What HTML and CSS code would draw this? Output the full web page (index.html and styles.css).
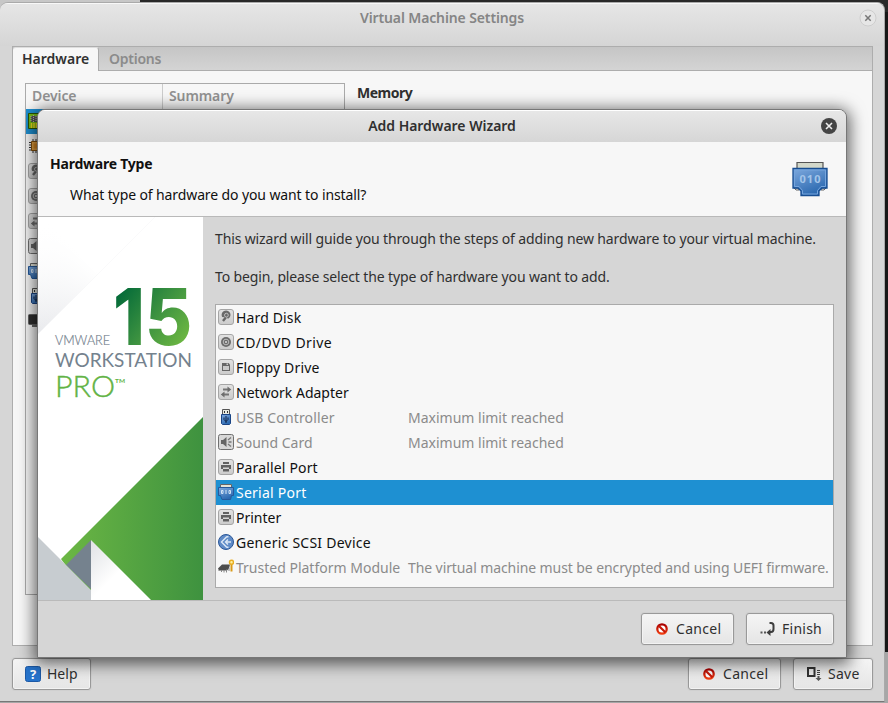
FILE: index.html
```html
<!DOCTYPE html>
<html lang="en">
<head>
<meta charset="utf-8">
<title>Virtual Machine Settings</title>
<link rel="stylesheet" href="styles.css">
</head>
<body>
<svg class="defs" width="0" height="0" aria-hidden="true">
  <defs>
    <linearGradient id="blue" x1="0" y1="0" x2=".5" y2="1"><stop offset="0" stop-color="#7ea9de"/><stop offset="1" stop-color="#2c69b0"/></linearGradient>
    <linearGradient id="paper" x1="0" y1="0" x2="0" y2="1"><stop offset="0" stop-color="#e2e2e2"/><stop offset="1" stop-color="#cbcbcb"/></linearGradient>
    <linearGradient id="stop" x1="0" y1="0" x2="0" y2="1"><stop offset="0" stop-color="#a80000"/><stop offset="1" stop-color="#f03c10"/></linearGradient>
    <symbol id="tile" viewBox="0 0 16 16"><rect x=".5" y=".5" width="15" height="15" rx="2.5" fill="url(#paper)" stroke="#a5a5a5"/></symbol>
    <symbol id="disk" viewBox="0 0 16 16"><use href="#tile"/><path d="M4.200 8A4.400 4.400 0 1 1 10 9.800L8.500 8.500z" fill="#6a6a6a"/><circle cx="8.400" cy="6.200" r="1.900" fill="none" stroke="#c8c8c8" stroke-width=".9"/><path d="M7.800 8.500 5 12" stroke="#666" stroke-width="2.400"/></symbol>
    <symbol id="cd" viewBox="0 0 16 16"><use href="#tile"/><circle cx="8" cy="8" r="5" fill="#6c6c6c"/><circle cx="8" cy="8" r="2.800" fill="none" stroke="#bbb"/><circle cx="8" cy="8" r="1" fill="#ddd"/></symbol>
    <symbol id="floppy" viewBox="0 0 16 16"><use href="#tile"/><path d="M4 4h6.500L12 5.500V12H4z" fill="#666"/><path d="M5 7h6V11H5z" fill="#c9c9c9"/><path d="M8.500 4.500h1.500V6H8.500z" fill="#ccc"/></symbol>
    <symbol id="net" viewBox="0 0 16 16"><use href="#tile"/><path d="M5 5.500h5M11 10.500H6" stroke="#747474" stroke-width="1.800"/><path d="M9.500 2.500 13.200 5.500 9.500 8.500zM6.500 7.500 2.800 10.500 6.500 13.500z" fill="#6c6c6c"/></symbol>
    <symbol id="usb" viewBox="0 0 16 16"><path d="M4.500.5h7v6h-7z" fill="#e8eae2" stroke="#555"/><path d="M6 2h1v2H6zM9 2h1v2H9z" fill="#333"/><path d="M3.500 5.500h9v9l-1 1h-7l-1-1z" fill="url(#blue)" stroke="#1a4484"/><path d="M8 7v7M6 8.500v2l2 2 2-2v-2" fill="none" stroke="#0c2247"/></symbol>
    <symbol id="sound" viewBox="0 0 16 16"><rect x=".5" y=".5" width="15" height="15" rx="2" fill="#d8d8d8" stroke="#707070"/><path d="M3 6h2l3.500-3v10L5 10H3z" fill="#666"/><path d="M10 6l3-2.500M10.500 8H13.500M10 10l3 2.500" stroke="#777" stroke-width="1.300"/></symbol>
    <symbol id="print" viewBox="0 0 16 16"><use href="#tile"/><path d="M5 3h6v2H5zM3 6h10v4h-2V8.500H5V10H3zM5 10h6v2.500H5z" fill="#606060"/></symbol>
    <symbol id="serial" viewBox="0 0 36 37"><path d="M5 9V2.500h26V9" fill="#d3d8ca" stroke="#555" stroke-width="1.200"/><path d="M2 28h5v2H4zM34 28h-5v2h3z" fill="#eee" stroke="#666"/><path d="M1 8.500h34V28h-5l-3 3v4.500H9V31l-3-3H1z" fill="url(#blue)" stroke="#174d91" stroke-width="1.300"/><path d="M2.500 10h31v16.500h-4.500l-3.500 4V34h-15v-3.500l-3.500-4H2.500z" fill="none" stroke="#75a4dc"/><text x="18.500" y="22.500" text-anchor="middle" class="digits">010</text></symbol>
    <symbol id="serial16" viewBox="0 0 16 16"><path d="M2.500 4V.500h11V4" fill="#e4e4d8" stroke="#666"/><path d="M.500 3.500h15v8h-2l-1 4H4l-1.500-4h-2z" fill="url(#blue)" stroke="#25599b"/><path d="M3.500 6.500H5v3H3.500zM8 6v4M11 6.500h1.500v3H11z" fill="none" stroke="#d2e3f5"/></symbol>
    <symbol id="scsi" viewBox="0 0 16 16"><circle cx="8" cy="8" r="7.500" fill="#5f8bc7" stroke="#2b5797"/><path d="M10.500 2.500 8.500 3 3.500 8l5 5 2 .5M13 8H7.500M10 5.500 7.500 8 10 10.500" fill="none" stroke="#dbe7f5" stroke-width="1.400"/></symbol>
    <symbol id="tpm" viewBox="0 0 16 16"><path d="m0 9.500 4-4h8l-1 4-2 2H1z" fill="#4d4d4d"/><path d="M1 11v1M3.500 11v2M6 11v2.500M8.500 10.500v3M11 9v3" stroke="#888"/><path d="M13.500 5v7.500" stroke="#d99a18" stroke-width="2"/><circle cx="13.500" cy="3.300" r="2" fill="#fff1a0" stroke="#e9ad20" stroke-width="1.500"/></symbol>
    <symbol id="ram" viewBox="0 0 16 16"><path d="M.500.500h15v15H.500z" fill="#75bd18" stroke="#265606"/><path d="M3 3h10v6H3z" fill="#555"/><path d="M3 3v6M5.500 2v7M8 3v6M10.500 2v7" stroke="#bbb" stroke-dasharray="1 1"/><path d="M3.500 10v5M6 10v5M8.500 10v5M11 10v5" stroke="#f3dc20" stroke-width="1.500"/></symbol>
    <symbol id="cpu" viewBox="0 0 16 16"><path d="M1 4.500h14M1 7h14M1 9.500h14M1 12h14M5 1v14M8 1v14M11 1v14" stroke="#333"/><path d="M3.500 3.500h9v9h-9z" fill="#e2a144" stroke="#84500d"/><path d="M5.500 5.500h5v5h-5z" fill="#d78925"/></symbol>
    <symbol id="display" viewBox="0 0 16 16"><rect x=".500" y="1.500" width="15" height="10" rx="1" fill="#303030" stroke="#666"/><path d="M4 13h8" stroke="#666" stroke-width="2"/></symbol>
    <symbol id="ban" viewBox="0 0 12 12"><circle cx="6" cy="6" r="4.700" fill="#fff" stroke="url(#stop)" stroke-width="2.300"/><path d="m2.700 2.700 6.600 6.600" stroke="#c81808" stroke-width="2.200"/></symbol>
  </defs>
</svg>

<div class="desktop">
<main class="settings">
  <header class="titlebar"><span class="title">Virtual Machine Settings</span>
    <svg class="close" viewBox="0 0 18 18"><circle cx="9" cy="9" r="8" fill="#e6e6e6" stroke="#cdcdcd"/><path d="m6.300 6.300 5.400 5.400m0-5.400-5.400 5.400" stroke="#777" stroke-width="1.500"/></svg>
  </header>
  <section class="notebook">
    <nav class="tabs"><span class="tab active">Hardware</span><span class="tab">Options</span></nav>
    <div class="page">
      <div class="tree">
        <div class="treehead"><span>Device</span><span>Summary</span></div>
        <div class="device chosen"><svg><use href="#ram"/></svg></div>
        <div class="device"><svg><use href="#cpu"/></svg></div>
        <div class="device"><svg><use href="#disk"/></svg></div>
        <div class="device"><svg><use href="#cd"/></svg></div>
        <div class="device"><svg><use href="#net"/></svg></div>
        <div class="device"><svg><use href="#sound"/></svg></div>
        <div class="device"><svg><use href="#serial16"/></svg></div>
        <div class="device"><svg><use href="#usb"/></svg></div>
        <div class="device"><svg><use href="#display"/></svg></div>
      </div>
      <h2>Memory</h2>
    </div>
  </section>
  <footer class="actions">
    <button class="btn help"><svg viewBox="0 0 16 16"><rect x=".500" y=".500" width="15" height="15" rx="2" fill="#2673cb" stroke="#1c59a6"/><text x="8" y="12.700" text-anchor="middle" class="question">?</text></svg><span>Help</span></button>
    <button class="btn cancel"><svg><use href="#ban"/></svg><span>Cancel</span></button>
    <button class="btn save"><svg viewBox="0 0 16 16"><path d="M2 2h6.500v8H2z" fill="none" stroke="#333" stroke-width="2"/><path d="M11 4.500h3M11 6.500h3M11 8.500h3" stroke="#444"/><path d="M11.500 10h2v2h2l-3 3-3-3h2z" fill="#555"/></svg><span>Save</span></button>
  </footer>
</main>

<section class="wizard">
  <header class="wizardbar"><span class="title">Add Hardware Wizard</span>
    <svg class="close" viewBox="0 0 18 18"><circle cx="9" cy="9" r="8" fill="#454545"/><path d="m6 6 6 6m0-6-6 6" stroke="#eee" stroke-width="1.600"/></svg>
  </header>
  <div class="intro">
    <div><h1>Hardware Type</h1><p>What type of hardware do you want to install?</p></div>
    <svg class="port"><use href="#serial"/></svg>
  </div>
  <div class="content">
    <svg class="banner" viewBox="0 0 165 383">
      <defs>
        <linearGradient id="corner" gradientUnits="userSpaceOnUse" x1="8" y1="8" x2="58" y2="58"><stop offset="0" stop-color="#fff"/><stop offset="1" stop-color="#e9eaed"/></linearGradient>
        <linearGradient id="fade" gradientUnits="userSpaceOnUse" x1="0" y1="116" x2="60" y2="56"><stop offset="0" stop-color="#fff" stop-opacity="0"/><stop offset="1" stop-color="#fff"/></linearGradient>
        <linearGradient id="hill"><stop offset="0" stop-color="#6cb744"/><stop offset="1" stop-color="#3e923f"/></linearGradient>
        <linearGradient id="fold" x1="0" y1="0" x2=".5" y2=".5"><stop offset="0" stop-color="#e0e1e5"/><stop offset="1" stop-color="#fff"/></linearGradient>
        <linearGradient id="number" gradientUnits="userSpaceOnUse" x1="78" y1="75" x2="150" y2="128"><stop offset="0" stop-color="#006838"/><stop offset=".5" stop-color="#3b9140"/><stop offset="1" stop-color="#72bb42"/></linearGradient>
      </defs>
      <path d="M0 0h165v383H0z" fill="#fff"/>
      <path d="M0 0h117L0 117z" fill="url(#corner)"/>
      <path d="M0 0h117L0 117z" fill="url(#fade)"/>
      <text x="75" y="128" textLength="79" lengthAdjust="spacingAndGlyphs" class="fifteen">15</text>
      <text x="17" y="128" textLength="55" lengthAdjust="spacingAndGlyphs" class="brand small">VMWARE</text>
      <text x="17" y="150" textLength="137" lengthAdjust="spacingAndGlyphs" class="brand large">WORKSTATION</text>
      <text x="17" y="180" textLength="60" lengthAdjust="spacingAndGlyphs" class="pro">PRO</text>
      <text x="77" y="165.500" textLength="10" lengthAdjust="spacingAndGlyphs" class="tm">TM</text>
      <path d="m23 342 142-142v183H53z" fill="url(#hill)"/>
      <path d="M53 323v49L28 348z" fill="#75828e"/>
      <path d="M0 320l53 53v10H0z" fill="#c7ccd0"/>
      <path d="m53 323 60 60H53z" fill="url(#fold)"/>
    </svg>
    <div class="choices">
      <p class="guide">This wizard will guide you through the steps of adding new hardware to your virtual machine.</p>
      <p class="begin">To begin, please select the type of hardware you want to add.</p>
      <div class="list">
        <div class="row"><svg><use href="#disk"/></svg><span>Hard Disk</span></div>
        <div class="row"><svg><use href="#cd"/></svg><span class="wider">CD/DVD Drive</span></div>
        <div class="row"><svg><use href="#floppy"/></svg><span>Floppy Drive</span></div>
        <div class="row"><svg><use href="#net"/></svg><span class="even">Network Adapter</span></div>
        <div class="row off"><svg><use href="#usb"/></svg><span>USB Controller</span><span class="even">Maximum limit reached</span></div>
        <div class="row off"><svg><use href="#sound"/></svg><span class="even">Sound Card</span><span class="even">Maximum limit reached</span></div>
        <div class="row"><svg><use href="#print"/></svg><span>Parallel Port</span></div>
        <div class="row selected"><svg><use href="#serial16"/></svg><span class="wide">Serial Port</span></div>
        <div class="row"><svg><use href="#print"/></svg><span class="even">Printer</span></div>
        <div class="row"><svg><use href="#scsi"/></svg><span class="wide">Generic SCSI Device</span></div>
        <div class="row off"><svg><use href="#tpm"/></svg><span class="even">Trusted Platform Module</span><span class="note">The virtual machine must be encrypted and using UEFI firmware.</span></div>
      </div>
    </div>
  </div>
  <footer class="wizardactions">
    <button class="btn cancel"><svg><use href="#ban"/></svg><span>Cancel</span></button>
    <button class="btn finish"><svg viewBox="0 0 16 16"><path d="M9.500 2h1.500q2.500 0 2.500 2.500v3.500Q13.500 11 11 11h-1" fill="none" stroke="#3d3d3d" stroke-width="2"/><path d="m10.500 8-4 3.500 4 3.500z" fill="#3d3d3d"/><path d="M.500 10.500h2v2h-2zM4 10.500h2v2H4z" fill="#555"/></svg><span>Finish</span></button>
  </footer>
</section>
</div>
</body>
</html>
```
FILE: styles.css
```css
* { box-sizing: border-box; }
body { margin: 0; background: #151515; font: 14px/20px "Noto Sans", sans-serif; color: #303030; overflow: hidden; }
.defs { position: absolute; }
.desktop { position: relative; width: 888px; height: 703px; padding-top: 2px; background: linear-gradient(90deg, #c7c7c7 140px, #292929 140px) 0 0/100% 12px no-repeat, linear-gradient(#171717 652px, #a7a7a7 652px); }
h1, h2, p { margin: 0; font-size: 14px; }
h1 { letter-spacing: -.23px; }
h2 { letter-spacing: -.5px; }
span, h1, h2, p { white-space: nowrap; }
.settings { width: 885px; height: 700px; background: #d6d6d6; border: 1px solid #aaa; border-left: 0; border-bottom-color: #777; border-radius: 8px 8px 0 0; display: flex; flex-direction: column; overflow: hidden; }
.titlebar { height: 43px; flex: none; display: grid; grid-template-columns: 1fr auto 1fr; padding: 4px 7px 0 0; background: linear-gradient(#e6e6e6, #d5d5d5); border-top: 1px solid #f8f8f8; color: #858585; }
.title { grid-column: 2; font-weight: 600; letter-spacing: -.12px; }
.titlebar .title { margin-left: 7px; }
.close { width: 18px; height: 18px; justify-self: end; margin-top: 1px; }
.notebook { margin: 0 11px 0 12px; height: 600px; border: 1px solid #adadad; display: flex; flex-direction: column; }
.tabs { height: 24px; flex: none; display: flex; background: linear-gradient(#c5c5c5, #d4d4d4); border-bottom: 1px solid #adadad; }
.tab { color: #8b8b8b; font-weight: 600; padding: 2px 10px; letter-spacing: -.25px; }
.tab.active { width: 86px; height: 24px; padding: 1px 9px; background: #f7f7f7; color: #303030; border-right: 1px solid #aaa; border-top: 1px solid #ddd; border-radius: 3px 3px 0 0; letter-spacing: 0; }
.page { flex: 1; display: flex; gap: 12px; background: #f7f7f7; padding: 12px; }
.tree { width: 320px; height: 512px; border: 1px solid #aaa; }
.treehead { height: 25px; display: flex; color: #929292; font-weight: 600; letter-spacing: -.1px; }
.treehead span { padding: 2px 6px; width: 137px; border-right: 1px solid #ccc; }
.treehead span + span { border: 0; }
.device { height: 25px; padding: 4px 2px; }
.device svg { display: block; width: 16px; height: 16px; }
.chosen { background: #1e90d2; }
.actions { display: flex; align-items: center; margin: 12px 11px 0 12px; gap: 12px; }
.btn { height: 32px; border: 1px solid #999; border-radius: 3px; background: linear-gradient(#f5f5f5, #e5e5e5); box-shadow: inset 0 0 0 1px #f3f3f3, 0 0 0 1px #b9b9b930; display: flex; align-items: center; gap: 8px; padding: 0 0 0 13px; font: inherit; color: #303030; }
.btn svg { width: 16px; height: 16px; flex: none; }
.btn.help { width: 79px; padding-left: 12px; gap: 6px; margin-right: auto; }
.btn.cancel { width: 93px; gap: 6px; letter-spacing: .3px; }
.btn.cancel svg { width: 12px; height: 12px; margin: 0 2px 0 1px; }
.btn.save { width: 80px; padding-left: 12px; }
.btn.save, .btn.finish { gap: 6px; letter-spacing: .25px; }
.btn.finish { width: 88px; }
.question { font: 700 13px "Noto Sans", sans-serif; fill: #fff; }
.wizard { position: absolute; left: 37px; top: 109px; width: 810px; height: 549px; border: 1px solid #777; border-radius: 8px 8px 0 0; background: #d6d6d6; box-shadow: 0 3px 16px 3px #0009; display: flex; flex-direction: column; overflow: hidden; }
.wizardbar { height: 32px; flex: none; display: grid; grid-template-columns: 1fr auto 1fr; align-items: center; padding-right: 8px; background: linear-gradient(#e7e7e7, #d6d6d6); border-top: 1px solid #fff; }
.wizardbar .close { margin: 0 0 1px; }
.wizardbar .title { margin: 0 0 2px 8px; letter-spacing: -.03px; }
.intro { height: 75px; flex: none; display: flex; justify-content: space-between; padding: 12px 18px 0 12px; background: #f7f7f7; border-bottom: 1px solid #b9b9b9; color: #101010; }
.intro p { margin: 11px 0 0 20px; letter-spacing: -.11px; }
.port { width: 36px; height: 37px; margin-top: 6px; }
.digits { font: 700 11px "Noto Sans", sans-serif; fill: #a3c4e9; letter-spacing: 1px; }
.content { height: 383px; flex: none; display: flex; }
.banner { width: 165px; height: 383px; flex: none; }
.choices { padding: 12px 0 0 12px; width: 630px; }
.guide { letter-spacing: -.132px; }
.begin { margin-top: 18px; letter-spacing: -.13px; }
.list { width: 619px; height: 284px; margin-top: 17px; background: #f7f7f7; border: 1px solid #aaa; color: #101010; }
.row { height: 25px; display: grid; grid-template-columns: 18px 172px 1fr; align-items: center; padding-left: 2px; letter-spacing: .15px; }
.row svg { width: 16px; height: 16px; margin-bottom: 1px; }
.row .even { letter-spacing: 0; }
.wide { letter-spacing: .25px; }
.wider { letter-spacing: .4px; }
.note { letter-spacing: -.09px; }
.row.off { color: #8b8b8b; }
.row.selected { background: #1e90d2; color: #fff; }
.wizardactions { flex: 1; display: flex; justify-content: flex-end; align-items: flex-start; gap: 12px; padding: 12px 12px 0 0; border-top: 1px solid #bababa; }
.brand { font-family: Lato, sans-serif; font-weight: 400; fill: #74828e; }
.small { font-size: 13px; font-weight: 300; stroke: #74828e; stroke-width: .2px; }
.large { font-size: 19px; }
.pro { font: 300 29px Lato, sans-serif; fill: #62b345; stroke: #62b345; stroke-width: .4px; }
.tm { font: 700 6px Lato, sans-serif; fill: #62b345; }
.fifteen { font: 800 78px Inter, sans-serif; fill: url(#number); }
```
